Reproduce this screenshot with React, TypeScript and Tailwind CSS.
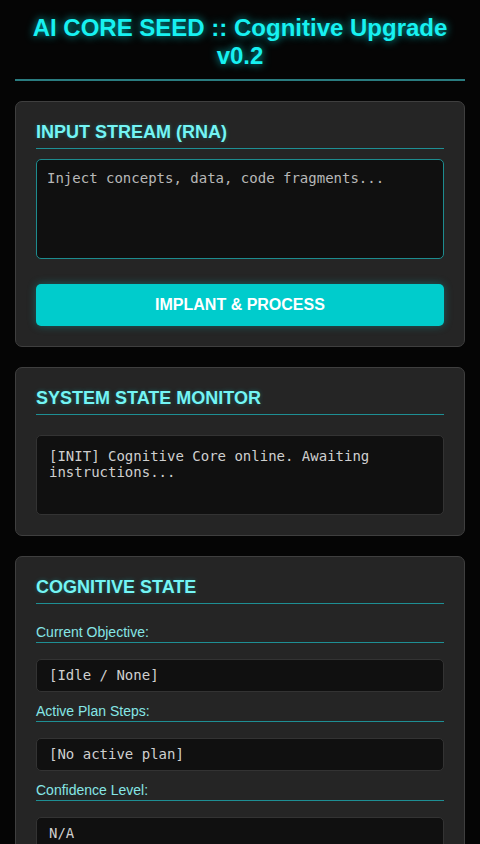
import React from 'react';

const sans = { fontFamily: '"Liberation Sans", Arial, sans-serif' };

function CardTitle({ children }: { children: React.ReactNode }) {
  return (
    <h2 className="text-[18px] leading-[20px] font-bold text-[#74f4f4] pb-[6px] border-b border-[#1e8f94] [text-shadow:0_0_4px_rgba(0,255,255,0.25)]">
      {children}
    </h2>
  );
}

function Field({ label, value, first }: { label: string; value: string; first?: boolean }) {
  return (
    <div>
      <div
        className={`${first ? 'mt-[20px]' : 'mt-[11px]'} text-[14px] leading-[16px] text-[#86e6e6] pb-[2px] border-b border-[#1e8f94]`}
      >
        {label}
      </div>
      <div className="mt-[16px] bg-[#101010] border border-[#333] rounded-[5px] px-[12px] py-[8px] font-['DejaVu_Sans_Mono',monospace] text-[14px] leading-[15px] text-[#cfcfcf]">
        {value}
      </div>
    </div>
  );
}

export default function App() {
  return (
    <div className="min-h-[844px] bg-[#050505] px-[15px] pt-[14px] pb-[20px]" style={sans}>
      {/* Title */}
      <h1 className="text-center text-[24px] leading-[28px] font-bold text-[#17f1f1] pb-[9px] border-b-2 border-[#2a7c80] [text-shadow:0_0_8px_rgba(0,255,255,0.7)]">
        AI CORE SEED :: Cognitive Upgrade v0.2
      </h1>

      <div className="mt-[20px] flex flex-col gap-[20px]">
        {/* Input */}
        <section className="bg-[#252525] border border-[#3f3f3f] rounded-[7px] p-[20px]">
          <CardTitle>INPUT STREAM (RNA)</CardTitle>
          <textarea
            placeholder="Inject concepts, data, code fragments..."
            className="mt-[10px] block w-full h-[100px] resize-none bg-[#101010] border border-[#1d8c8f] rounded-[5px] p-[10px] font-['DejaVu_Sans_Mono',monospace] text-[14px] leading-[17px] text-[#cfcfcf] placeholder:text-[#b8b8b8] outline-none"
          />
          <button className="mt-[25px] w-full h-[42px] bg-[#00cccc] rounded-[5px] text-white text-[16px] font-bold shadow-[0_0_8px_rgba(0,204,204,0.35)]">
            IMPLANT &amp; PROCESS
          </button>
        </section>

        {/* Monitor */}
        <section className="bg-[#252525] border border-[#3f3f3f] rounded-[7px] p-[20px]">
          <CardTitle>SYSTEM STATE MONITOR</CardTitle>
          <div className="mt-[20px] h-[80px] bg-[#101010] border border-[#333] rounded-[5px] p-[12px] font-['DejaVu_Sans_Mono',monospace] text-[14px] leading-[16px] text-[#cfcfcf]">
            [INIT] Cognitive Core online. Awaiting instructions...
          </div>
        </section>

        {/* Cognitive state */}
        <section className="bg-[#252525] border border-[#3f3f3f] rounded-[7px] p-[20px]">
          <CardTitle>COGNITIVE STATE</CardTitle>
          <Field first label="Current Objective:" value="[Idle / None]" />
          <Field label="Active Plan Steps:" value="[No active plan]" />
          <Field label="Confidence Level:" value="N/A" />
        </section>
      </div>
    </div>
  );
}
